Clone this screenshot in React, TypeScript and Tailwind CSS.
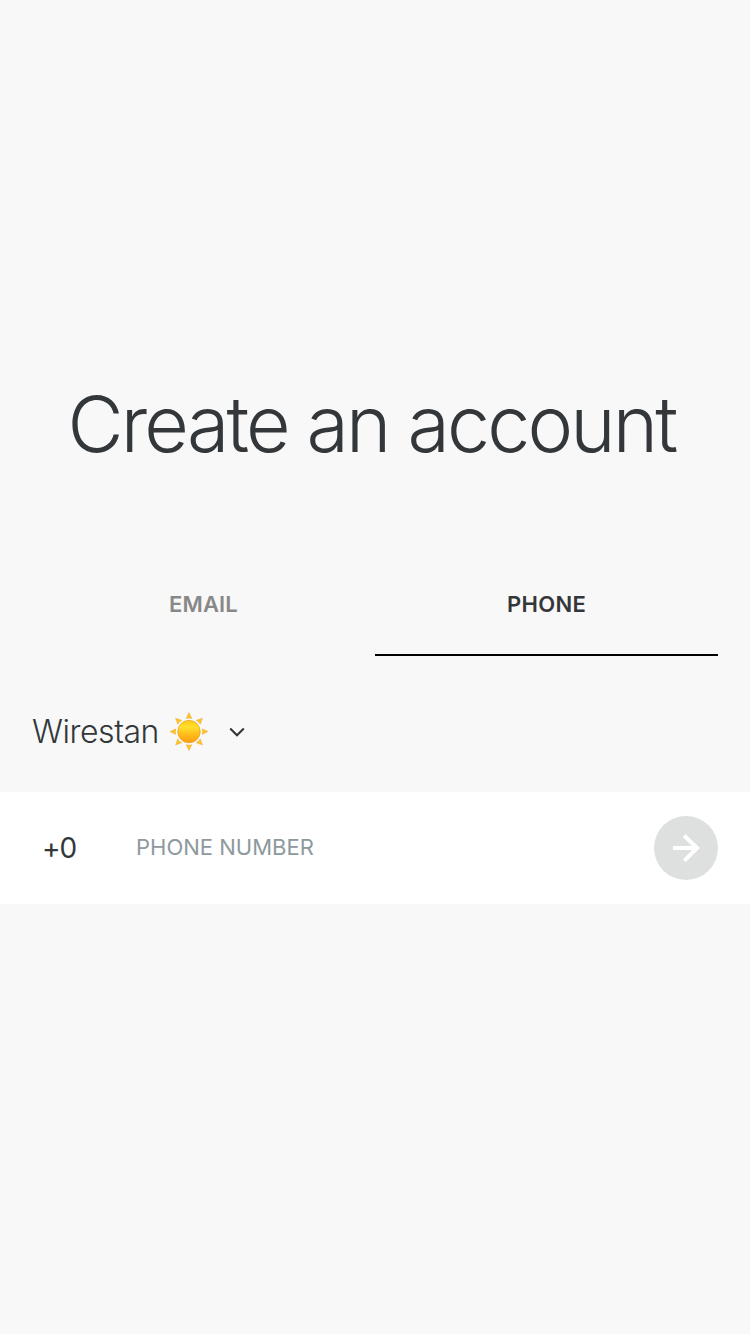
function SunIcon() {
  return (
    <svg className="ml-[12px] h-10 w-10 shrink-0" viewBox="-20 -20 40 40" aria-hidden="true">
      <defs>
        <linearGradient id="sunDisc" x1="0" y1="0" x2="0" y2="1">
          <stop offset="0" stopColor="#ffc90f" />
          <stop offset="0.3" stopColor="#ffe02e" />
          <stop offset="0.62" stopColor="#ffbd1b" />
          <stop offset="1" stopColor="#ff9d10" />
        </linearGradient>
      </defs>
      {[0, 45, 90, 135, 180, 225, 270, 315].map((angle) => (
        <path key={angle} d="M-2.8 -13.1Q0 -14 2.8 -13.1L0 -19Z" fill="#ffc21f" stroke="#e9a53b" strokeWidth="0.4" transform={`translate(0 -0.4) rotate(${angle})`} />
      ))}
      <circle cy="-0.4" r="11.2" fill="url(#sunDisc)" stroke="#e99a16" strokeWidth="0.7" />
    </svg>
  );
}

export default function App() {
  return (
    <main className="flex h-[1334px] w-[750px] flex-col bg-[#f8f8f8] font-['Inter',sans-serif] text-[#33373a]">
      <h1 className="mt-[376px] h-[96px] pr-[7px] text-center text-[77px] leading-[96px] font-light tracking-[-2.8px] whitespace-nowrap">Create an account</h1>
      <div className="mt-[82px] flex h-[102px] px-8 text-[22px] font-semibold">
        <button className="h-full flex-1 pb-0.5 tracking-[0.15px] text-[#888]">EMAIL</button>
        <button className="h-full flex-1 border-b-2 border-black tracking-[0.3px]">PHONE</button>
      </div>
      <div className="mt-[53px] flex h-[46px] items-center pl-8">
        <span className="w-[125px] text-[32px] leading-[46px] font-light tracking-[-0.45px]">Wirestan</span>
        <SunIcon />
        <svg className="ml-5 h-4 w-4 shrink-0" viewBox="0 0 16 16" fill="none" stroke="#33373a" strokeWidth="2.1" aria-hidden="true">
          <path d="M1.2 4.5L8 11.3L14.8 4.5" />
        </svg>
      </div>
      <div className="mt-[37px] flex h-[112px] items-center bg-white pr-8 pl-[42px] text-[28px]">
        <span className="w-[94px] tracking-[-1px]">+0</span>
        <span className="flex-1 pb-0.5 text-[22px] text-[#8d999d]">PHONE NUMBER</span>
        <button className="flex h-16 w-16 items-center justify-center rounded-full bg-[#dee0df]" aria-label="Continue">
          <svg className="h-16 w-16" viewBox="0 0 64 64" fill="none" stroke="white" strokeWidth="4" aria-hidden="true">
            <path d="M19 32H43M30.2 19.5L43 32L30.2 44.8" />
          </svg>
        </button>
      </div>
    </main>
  );
}
